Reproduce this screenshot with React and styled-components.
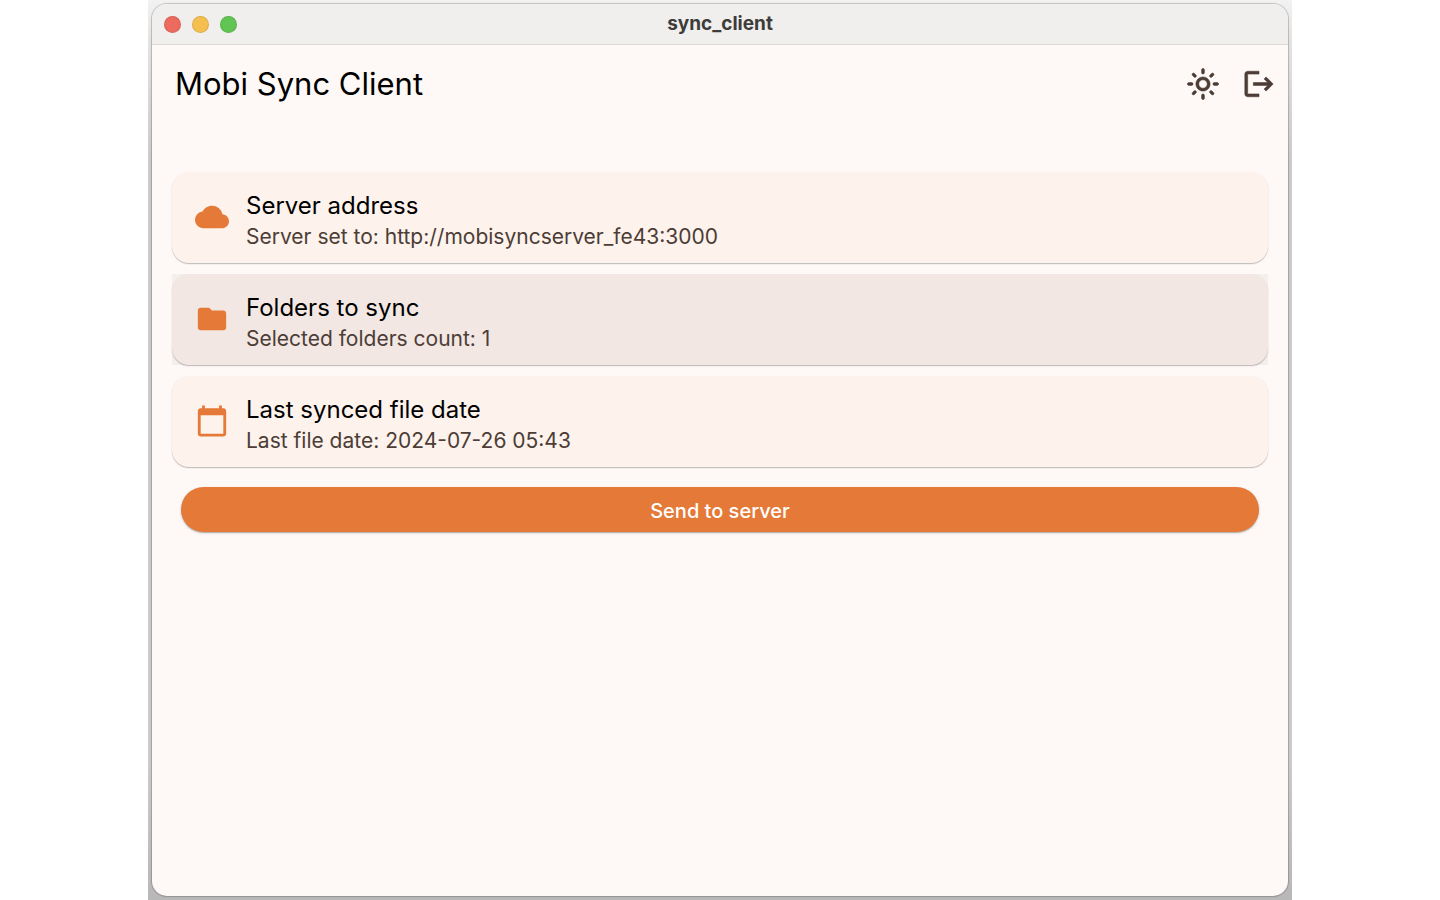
import React from "react";
import styled, { createGlobalStyle } from "styled-components";
import {
  MdCloud,
  MdFolder,
  MdCalendarToday,
  MdOutlineLightMode,
  MdLogout,
} from "react-icons/md";

const GlobalStyle = createGlobalStyle`
  *, *::before, *::after { box-sizing: border-box; }
  body {
    margin: 0;
    background: #ffffff;
    color: #000000;
    font-family: Inter, "Liberation Sans", sans-serif;
  }
`;

const Backdrop = styled.div`
  display: flex;
  max-width: 1144px;
  min-height: 100vh;
  margin: 0 auto;
  padding: 4px;
  background: linear-gradient(#f2f2f2 0, #e4e4e4 40px, #cbcbcb 160px, #cbcbcb 85%, #b8b8b8 100%);
`;

const Window = styled.div`
  display: flex;
  flex: 1;
  flex-direction: column;
  min-width: 0;
  overflow: hidden;
  border-radius: 15px;
  background: #fef9f6;
  box-shadow: 0 0 1px 1px rgba(0, 0, 0, 0.2);
`;

const TitleBar = styled.header`
  display: grid;
  grid-template-columns: 1fr auto 1fr;
  align-items: center;
  height: 41px;
  padding: 0 12px;
  border-bottom: 1px solid #dcdad8;
  background: #f0efed;
`;

const WindowControls = styled.div`
  display: flex;
  gap: 11px;
`;

const ControlDot = styled.button`
  width: 17px;
  height: 17px;
  padding: 0;
  border: 1px solid rgba(0, 0, 0, 0.1);
  border-radius: 50%;
  background: ${({ $color }) => $color};
`;

const WindowTitle = styled.span`
  color: #3d3c3b;
  font-size: 19px;
  font-weight: 700;
  line-height: 24px;
`;

const AppBar = styled.div`
  display: flex;
  align-items: center;
  justify-content: space-between;
  height: 77px;
  padding: 0 12px 0 23px;
`;

const AppTitle = styled.h1`
  margin: 0;
  font-size: 31px;
  font-weight: 400;
  line-height: 40px;
`;

const Actions = styled.div`
  display: flex;
  gap: 22px;
`;

const IconButton = styled.button`
  display: flex;
  padding: 0;
  border: 0;
  background: none;
  color: #4c3d36;
  font-size: 34px;

  path:not([fill="none"]) {
    stroke-width: 0.4;
  }
`;

const Content = styled.main`
  display: flex;
  flex-direction: column;
  gap: 20px;
  padding: 50px 20px 20px;
`;

const Settings = styled.div`
  display: flex;
  flex-direction: column;
  gap: 11px;
`;

const HoverArea = styled.div`
  background: ${({ $hovered }) => ($hovered ? "#f4efed" : "transparent")};
`;

const Tile = styled.button`
  display: flex;
  align-items: center;
  gap: 17px;
  width: 100%;
  height: 91px;
  padding: 0 23px 2px;
  border: 0;
  border-radius: 17px;
  background: ${({ $hovered }) => ($hovered ? "#f2e7e3" : "#fdf2ec")};
  box-shadow: 0 1px 1px rgba(0, 0, 0, 0.2), 0 1px 2px rgba(0, 0, 0, 0.08);
  color: #000000;
  font-family: inherit;
  text-align: left;
`;

const TileIcon = styled.span`
  display: flex;
  color: #e57937;
  font-size: 34px;
`;

const TileText = styled.span`
  display: flex;
  flex-direction: column;
  padding-top: 9px;
`;

const TileTitle = styled.span`
  font-size: 24px;
  line-height: 32px;
`;

const TileSubtitle = styled.span`
  color: #4c3d36;
  font-size: 21px;
  line-height: 30px;
`;

const SendButton = styled.button`
  height: 45px;
  margin: 0 9px;
  padding: 4px 24px 0;
  border: 0;
  border-radius: 23px;
  background: #e57937;
  box-shadow: 0 1px 1px rgba(0, 0, 0, 0.2), 0 1px 3px rgba(0, 0, 0, 0.16);
  color: #ffffff;
  font-family: inherit;
  font-size: 20px;
  font-weight: 500;
  line-height: 29px;
`;

const controls = [
  { label: "Close", color: "#ed6a5e" },
  { label: "Minimize", color: "#f5bf4f" },
  { label: "Zoom", color: "#61c554" },
];

const settings = [
  {
    Icon: MdCloud,
    title: "Server address",
    subtitle: "Server set to: http://mobisyncserver_fe43:3000",
  },
  {
    Icon: MdFolder,
    title: "Folders to sync",
    subtitle: "Selected folders count: 1",
    hovered: true,
  },
  {
    Icon: MdCalendarToday,
    title: "Last synced file date",
    subtitle: "Last file date: 2024-07-26 05:43",
  },
];

export default function App() {
  return (
    <Backdrop>
      <GlobalStyle />
      <Window>
        <TitleBar>
          <WindowControls>
            {controls.map(({ label, color }) => (
              <ControlDot key={label} type="button" aria-label={label} $color={color} />
            ))}
          </WindowControls>
          <WindowTitle>sync_client</WindowTitle>
        </TitleBar>
        <AppBar>
          <AppTitle>Mobi Sync Client</AppTitle>
          <Actions>
            <IconButton type="button" aria-label="Light mode">
              <MdOutlineLightMode />
            </IconButton>
            <IconButton type="button" aria-label="Log out">
              <MdLogout />
            </IconButton>
          </Actions>
        </AppBar>
        <Content>
          <Settings>
            {settings.map(({ Icon, title, subtitle, hovered }) => (
              <HoverArea key={title} $hovered={hovered}>
                <Tile type="button" $hovered={hovered}>
                  <TileIcon>
                    <Icon />
                  </TileIcon>
                  <TileText>
                    <TileTitle>{title}</TileTitle>
                    <TileSubtitle>{subtitle}</TileSubtitle>
                  </TileText>
                </Tile>
              </HoverArea>
            ))}
          </Settings>
          <SendButton type="button">Send to server</SendButton>
        </Content>
      </Window>
    </Backdrop>
  );
}
